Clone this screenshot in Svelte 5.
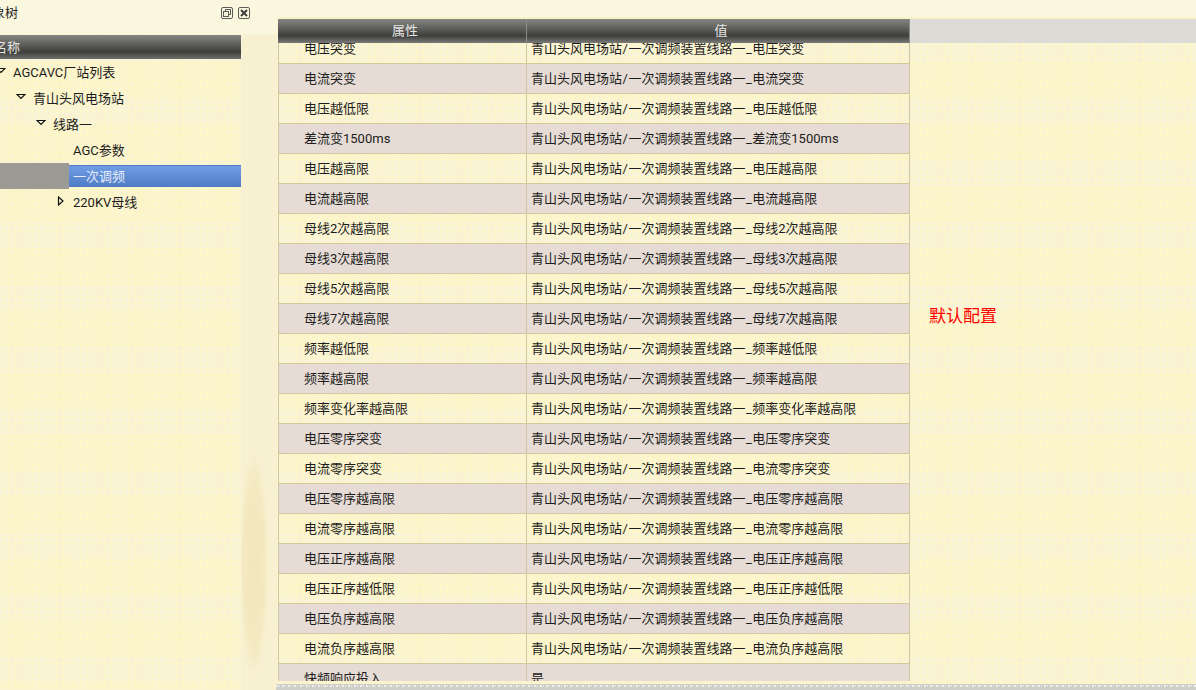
<script>
	// tree rows on the left panel
	const tree = [
		{ label: 'AGCAVC厂站列表', indent: 13, arrow: 'down', arrowX: -4 },
		{ label: '青山头风电场站', indent: 33, arrow: 'down', arrowX: 16 },
		{ label: '线路一', indent: 53, arrow: 'down', arrowX: 36 },
		{ label: 'AGC参数', indent: 73 },
		{ label: '一次调频', indent: 73, selected: true },
		{ label: '220KV母线', indent: 73, arrow: 'right', arrowX: 57 }
	]

	const names = [
		'电压突变', '电流突变', '电压越低限', '差流变1500ms', '电压越高限', '电流越高限',
		'母线2次越高限', '母线3次越高限', '母线5次越高限', '母线7次越高限', '频率越低限',
		'频率越高限', '频率变化率越高限', '电压零序突变', '电流零序突变', '电压零序越高限',
		'电流零序越高限', '电压正序越高限', '电压正序越低限', '电压负序越高限', '电流负序越高限'
	]
</script>

<div class="page">
	<aside class="left">
		<div class="title-bar">
			<span class="title">对象树</span>
			<svg class="win-icon" width="12" height="12" viewBox="0 0 12 12">
				<rect x="0.5" y="0.5" width="11" height="11" rx="1.5" fill="none" stroke="#5c5c58" />
				<rect x="4.5" y="2.5" width="5" height="5" fill="none" stroke="#5c5c58" />
				<rect x="2.5" y="4.5" width="5" height="5" fill="#f9f5da" stroke="#5c5c58" />
			</svg>
			<svg class="win-icon" width="12" height="12" viewBox="0 0 12 12">
				<rect x="0.5" y="0.5" width="11" height="11" rx="1.5" fill="none" stroke="#5c5c58" />
				<path d="M3 3 L9 9 M9 3 L3 9" stroke="#3e3e3c" stroke-width="2" />
			</svg>
		</div>
		<div class="left-body">
			<div class="tree-panel">
				<div class="tree-head"><span>名称</span></div>
				{#each tree as row}
					<div class="tree-row" class:selected={row.selected}>
						{#if row.selected}
							<div class="sel-left"></div>
							<div class="sel-bar"></div>
						{/if}
						{#if row.arrow === 'down'}
							<svg class="arrow" style="left: {row.arrowX}px" width="10" height="10" viewBox="0 0 10 10">
								<path d="M1 2.5 H9 L5 6.5 Z" fill="none" stroke="#111" stroke-width="1.2" />
							</svg>
						{:else if row.arrow === 'right'}
							<svg class="arrow" style="left: {row.arrowX}px" width="10" height="10" viewBox="0 0 10 10">
								<path d="M1.5 1 V9 L6 5 Z" fill="none" stroke="#111" stroke-width="1.2" />
							</svg>
						{/if}
						<span class="tree-label" style="padding-left: {row.indent}px">{row.label}</span>
					</div>
				{/each}
			</div>
			<div class="splitter"></div>
		</div>
	</aside>

	<main class="right">
		<div class="table-wrap">
			<div class="table-head">
				<div class="th col-a">属性</div>
				<div class="th col-b">值</div>
				<div class="th-rest"></div>
			</div>
			<div class="table-area">
				<div class="rows">
					{#each names as name, i}
						<div class="row" class:alt={i % 2 === 1}>
							<div class="cell col-a name">{name}</div>
							<div class="cell col-b">青山头风电场站<span class="sep">/</span>一次调频装置线路一<span class="sep">_</span>{name}</div>
						</div>
					{/each}
					<div class="row alt">
						<div class="cell col-a name">快频响应投入</div>
						<div class="cell col-b">是</div>
					</div>
				</div>
				<div class="side"><span class="note">默认配置</span></div>
			</div>
		</div>
		<div class="scrollbar"></div>
	</main>
</div>

<style>
	:global(body) {
		margin: 0;
		overflow: hidden;
	}

	.page {
		display: flex;
		width: 1196px;
		height: 690px;
		overflow: hidden;
		font-family: Roboto, 'Noto Sans CJK SC', sans-serif;
		font-size: 13px;
		color: #1c1c1c;
		background-color: #fbf4cf;
		background-image:
			radial-gradient(circle at 3px 3px, rgba(255, 250, 190, 0.6) 1px, transparent 2px),
			repeating-linear-gradient(90deg, rgba(255, 255, 255, 0.12) 0, rgba(255, 255, 255, 0) 20px, rgba(255, 255, 255, 0.12) 40px),
			repeating-linear-gradient(180deg, #fbf3ca 0, #fbf3ca 37px, #f9f2d2 37px, #f9f2d2 62px);
		background-size: 6px 6px, auto, auto;
	}

	.left {
		width: 277px;
		flex: none;
		display: flex;
		flex-direction: column;
	}

	.title-bar {
		display: flex;
		align-items: center;
		height: 34px;
		padding-bottom: 9px;
		box-sizing: border-box;
		background: #faf7df;
	}

	.title {
		width: 221px;
		flex: none;
		margin-top: -2px;
		color: #222;
		text-indent: -21px;
		white-space: nowrap;
	}

	.win-icon {
		flex: none;
		margin-right: 5px;
	}

	.left-body {
		flex: 1;
		display: flex;
		min-height: 0;
	}

	.tree-panel {
		width: 241px;
		flex: none;
		padding-top: 1px;
		overflow: hidden;
	}

	.tree-head {
		height: 24px;
		line-height: 25px;
		margin-bottom: 1px;
		color: #e6e6e2;
		background: linear-gradient(180deg, #858583 0, #5e5e5c 40%, #3e3e3d 70%, #6e6e6c 100%);
		overflow: hidden;
	}

	.tree-head span {
		display: block;
		margin-left: -6px;
	}

	.tree-row {
		position: relative;
		height: 26px;
		line-height: 26px;
		white-space: nowrap;
	}

	.tree-row.selected {
		color: #e8eefb;
	}

	.sel-left {
		position: absolute;
		left: 0;
		width: 69px;
		top: -1px;
		bottom: 1px;
		background: #9c9a94;
	}

	.sel-bar {
		position: absolute;
		left: 69px;
		right: 0;
		top: 1px;
		bottom: 3px;
		border-top: 1px solid #4f7cc4;
		box-sizing: border-box;
		background: linear-gradient(180deg, #6f9de4, #4f7cc4);
	}

	.tree-label {
		position: relative;
		display: block;
	}

	.arrow {
		position: absolute;
		top: 6px;
	}

	.splitter {
		flex: 1;
		background:
			radial-gradient(ellipse 15px 115px at 13px 530px, #f2e6bb 0, rgba(242, 230, 187, 0.75) 70%, transparent 100%),
			linear-gradient(90deg, #f8f1d1, #f8f1d1);
	}

	.right {
		flex: 1;
		display: flex;
		flex-direction: column;
		min-width: 0;
		padding-top: 17px;
		background-image: linear-gradient(180deg, #faf7df 0, #faf7df 17px, transparent 17px);
	}

	.table-wrap {
		flex: 1;
		display: flex;
		flex-direction: column;
		min-height: 0;
		margin-left: 1px;
		border-top: 2px solid #f8f2c4;
	}

	.table-head {
		display: flex;
		flex: none;
		height: 24px;
		line-height: 24px;
		color: #e6e6e2;
		text-align: center;
	}

	.th {
		padding-left: 6px;
		background: linear-gradient(180deg, #858583 0, #5e5e5c 40%, #3e3e3d 70%, #7a7a78 100%);
		border-right: 1px solid #8c8c8a;
	}

	.th-rest {
		flex: 1;
		background: #dcdbd6;
	}

	.col-a {
		width: 249px;
		flex: none;
		box-sizing: border-box;
	}

	.col-b {
		width: 383px;
		flex: none;
		box-sizing: border-box;
	}

	.table-area {
		flex: 1;
		display: flex;
		min-height: 0;
		overflow: hidden;
	}

	.rows {
		flex: none;
		width: 632px;
		margin-top: -9px;
	}

	.row {
		display: flex;
		height: 30px;
		line-height: 29px;
		box-sizing: border-box;
		border-bottom: 1px solid #d2c99c;
		white-space: nowrap;
	}

	.row.alt {
		background: #e6dcd5;
	}

	.cell {
		border-right: 1px solid #cdc6a0;
		padding-left: 4px;
	}

	.cell.name {
		border-left: 1px solid #cdc6a0;
		padding-left: 25px;
	}

	.sep {
		margin: 0 0.5px;
	}

	.side {
		flex: 1;
		display: flex;
		align-items: center;
		padding-left: 19px;
		padding-bottom: 95px;
	}

	.note {
		color: #f00;
		font-size: 17px;
		font-family: 'Noto Sans CJK SC', sans-serif;
	}

	.scrollbar {
		flex: none;
		height: 6px;
		margin-top: 3px;
		margin-left: -1px;
		background-color: #cfcfca;
		background-image: repeating-linear-gradient(90deg, #f0f0ea 0, #f0f0ea 2px, #cfcfca 2px, #cfcfca 3px, #e4e4de 3px, #e4e4de 4px, #cfcfca 4px, #cfcfca 6px);
		background-size: 100% 2px;
		background-position: 0 1px;
		background-repeat: no-repeat;
	}
</style>
